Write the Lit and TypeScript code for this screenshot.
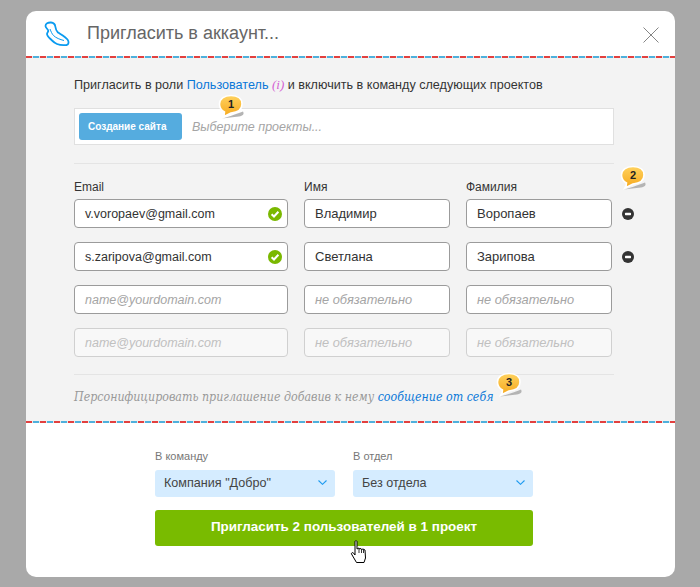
import { LitElement, html, css, svg } from "lit";
import { customElement } from "lit/decorators.js";

const bubble = (n: string, cls: string) => html`
  <div class="bubble ${cls}">
    <svg width="34" height="30" viewBox="0 0 34 30">
      <defs>
        <linearGradient id="g${n}" x1="0" y1="0" x2="0" y2="1">
          <stop offset="0" stop-color="#ffd25e" />
          <stop offset="1" stop-color="#f6a81c" />
        </linearGradient>
      </defs>
      <path d="M6 24.500 C12 23 18 21 27 17.500 C28.500 20 27 22 23 22.500 C17 23 11 24 6 24.500 Z" fill="#b4b4b4" />
      <path
        d="M15 1.500 C22 1.500 26 5 26 10 C26 16 21 18.500 15 19 C12 20.500 9 22 7 23 C8 21.500 8.500 20 8.500 18 C5.500 16.500 3.500 14 3.500 10 C3.500 5 8 1.500 15 1.500 Z"
        fill="url(#g${n})"
        stroke="#fff"
        stroke-width="1.600"
      />
    </svg>
    <span>${n}</span>
  </div>
`;

const check = html`<svg class="check" width="14" height="14" viewBox="0 0 14 14">
  <circle cx="7" cy="7" r="7" fill="#7ab800" />
  <path d="M3.600 7.200 L6 9.500 L10.400 4.800" fill="none" stroke="#fff" stroke-width="2" />
</svg>`;

const minus = html`<svg class="minus" width="12" height="12" viewBox="0 0 12 12">
  <circle cx="6" cy="6" r="6" fill="#333" />
  <rect x="3" y="4.800" width="6" height="2.400" rx="0.600" fill="#fff" />
</svg>`;

const chevron = svg`<path d="M0.500 0.500 L4.500 4.300 L8.500 0.500" fill="none" stroke="#1e9bf0" stroke-width="1.100" />`;

@customElement("app-root")
export class AppRoot extends LitElement {
  static styles = css`
    :host {
      display: block;
      position: relative;
      width: 700px;
      height: 587px;
      background: #a9a9a9;
      overflow: hidden;
      font-family: "Liberation Sans", Arial, sans-serif;
      padding: 11px 25px 10px 26px;
      box-sizing: border-box;
    }
    .modal {
      background: #fff;
      border-radius: 10px;
      height: 566px;
      overflow: hidden;
      position: relative;
    }
    .head {
      height: 45px;
      display: flex;
      align-items: center;
      padding: 0 16px 0 18px;
    }
    .logo { flex: none; }
    .title {
      font-size: 18px;
      color: #666;
      margin-left: 15px;
      flex: 1;
    }
    .close { flex: none; position: relative; top: 1px; }
    .stripe {
      height: 2px;
      background: repeating-linear-gradient(90deg, #e2403f 0 6px, #e8e8e8 6px 7px, #4fb0dc 7px 13px, #e8e8e8 13px 14px);
    }
    .body {
      background: #f3f3f3;
      height: 363px;
      box-sizing: border-box;
      padding: 19px 61px 0 48px;
      position: relative;
    }
    .intro { font-size: 12.600px; line-height: 15px; color: #333; white-space: nowrap; }
    a { color: #0a78d8; text-decoration: none; }
    .role { color: #d35fd3; font-family: "Liberation Serif", serif; font-style: italic; font-size: 13px; }
    .picker {
      margin-top: 15px;
      height: 37px;
      box-sizing: border-box;
      background: #fff;
      border: 1px solid #e0e0e0;
      display: flex;
      align-items: center;
      padding-left: 4px;
    }
    .chip {
      width: 103px;
      height: 27px;
      background: #55acdf;
      border-radius: 3px;
      color: #fff;
      font-size: 10px;
      font-weight: bold;
      display: flex;
      align-items: center;
      box-sizing: border-box;
      padding-left: 9px;
    }
    .ph { margin-left: 10px; font-size: 12.500px; font-style: italic; color: #a5a5a5; }
    hr { border: 0; height: 1px; background: #e4e4e4; margin: 0; }
    .sep1 { margin-top: 18px; }
    .grid {
      display: grid;
      grid-template-columns: 214px 146px 146px;
      column-gap: 16px;
      margin-top: 16px;
      font-size: 12px;
    }
    .lab { height: 14px; line-height: 14px; color: #333; }
    .rows { display: flex; flex-direction: column; gap: 14px; margin-top: 5px; }
    .row {
      display: grid;
      grid-template-columns: 214px 146px 146px 16px;
      column-gap: 16px;
      align-items: center;
    }
    .inp {
      height: 29px;
      box-sizing: border-box;
      border: 1px solid #9b9b9b;
      border-radius: 4px;
      background: #fff;
      font-size: 13px;
      color: #333;
      display: flex;
      align-items: center;
      padding: 0 5px 0 10px;
      justify-content: space-between;
    }
    .inp.mail { font-size: 12.500px; }
    .inp.empty { color: #a5a5a5; font-style: italic; font-size: 12.800px; }
    .inp.off { background: #f8f8f8; border-color: #d0d0d0; color: #c0c0c0; font-style: italic; font-size: 12.800px; }
    .inp.empty.mail, .inp.off.mail { font-size: 12.500px; }
    .minus { margin-left: -6px; display: block; }
    .sep2 { margin-top: 17px; }
    .note {
      margin-top: 14px;
      font-family: "DejaVu Serif", serif;
      font-stretch: condensed;
      font-style: italic;
      font-size: 12.300px;
      line-height: 16px;
      color: #999;
      white-space: nowrap;
    }
    .foot {
      padding: 27px 0 0 129px;
      width: 378px;
    }
    .sels { display: grid; grid-template-columns: 180px 180px; column-gap: 18px; }
    .sl { font-size: 11px; color: #777; height: 13px; line-height: 13px; margin-bottom: 7px; }
    .sel {
      height: 27px;
      box-sizing: border-box;
      padding: 0 8px 2px 9px;
      background: #d5ecff;
      border-radius: 3px;
      display: flex;
      align-items: center;
      justify-content: space-between;
      font-size: 12.600px;
      color: #444;
    }
    .btn {
      margin-top: 13px;
      height: 36px;
      box-sizing: border-box;
      padding-bottom: 3px;
      border-radius: 3px;
      background: #79bb00;
      color: #fff;
      font-size: 13.450px;
      font-weight: bold;
      display: flex;
      align-items: center;
      justify-content: center;
    }
    .bubble {
      position: absolute;
      width: 34px;
      height: 30px;
    }
    .bubble svg { display: block; }
    .bubble span {
      position: absolute;
      left: 3px;
      top: 2px;
      width: 24px;
      text-align: center;
      font-size: 11px;
      font-weight: bold;
      line-height: 16px;
      color: #222;
    }
    .b1 { left: 190px; top: 36px; }
    .b2 { left: 592px; top: 107px; }
    .b3 { left: 468px; top: 314px; }
    .cursor { position: absolute; left: 350px; top: 540px; }
  `;

  render() {
    const rows: [string, string, string][] = [
      ["v.voropaev@gmail.com", "Владимир", "Воропаев"],
      ["s.zaripova@gmail.com", "Светлана", "Зарипова"],
    ];
    return html`
      <div class="modal">
        <div class="head">
          <svg class="logo" width="28" height="28" viewBox="0 0 28 28">
            <path
              d="M1.500 6 C1.500 3.500 4 2.300 7 2.500 C9.500 2.700 11 4 11.300 6.500 C11.600 9 12 10.500 14 12.500 C17 14.500 21 16.500 23.500 19.500 C25 21.500 25 24.500 22.500 25 C19 25.400 15.500 25 13 24 C10.500 23 9 21.500 7.500 20 C5.500 18 3 16 3 14 C3 12.500 4.300 12 4.300 10.800 C4.300 9.300 1.500 8 1.500 6 Z"
              fill="none"
              stroke="#0a9bf0"
              stroke-width="1.800"
              stroke-linejoin="round"
            />
            <path d="M6 9 C7 11.500 8 14 9.500 15.500 C12 18 16 19.500 20 20.500" fill="none" stroke="#0a9bf0" stroke-width="1" />
          </svg>
          <div class="title">Пригласить в аккаунт...</div>
          <svg class="close" width="16" height="16" viewBox="0 0 16 16">
            <path d="M0.500 0.500 L15.500 15.500 M15.500 0.500 L0.500 15.500" stroke="#777" stroke-width="0.900" />
          </svg>
        </div>
        <div class="stripe"></div>
        <div class="body">
          <div class="intro">
            Пригласить в роли <a>Пользователь</a> <span class="role">(i)</span> и включить в команду следующих проектов
          </div>
          <div class="picker">
            <div class="chip">Создание сайта</div>
            <div class="ph">Выберите проекты...</div>
          </div>
          <hr class="sep1" />
          <div class="grid">
            <div class="lab">Email</div>
            <div class="lab">Имя</div>
            <div class="lab">Фамилия</div>
          </div>
          <div class="rows">
            ${rows.map(
              (r) => html`<div class="row">
                <div class="inp mail">${r[0]} ${check}</div>
                <div class="inp">${r[1]}</div>
                <div class="inp">${r[2]}</div>
                ${minus}
              </div>`
            )}
            <div class="row">
              <div class="inp empty mail">name@yourdomain.com</div>
              <div class="inp empty">не обязательно</div>
              <div class="inp empty">не обязательно</div>
            </div>
            <div class="row">
              <div class="inp off mail">name@yourdomain.com</div>
              <div class="inp off">не обязательно</div>
              <div class="inp off">не обязательно</div>
            </div>
          </div>
          <hr class="sep2" />
          <div class="note">Персонифицировать приглашение добавив к нему <a>сообщение от себя</a></div>
          ${bubble("1", "b1")} ${bubble("2", "b2")} ${bubble("3", "b3")}
        </div>
        <div class="stripe"></div>
        <div class="foot">
          <div class="sels">
            <div>
              <div class="sl">В команду</div>
              <div class="sel">Компания "Добро" <svg width="9" height="5" viewBox="0 0 9 5">${chevron}</svg></div>
            </div>
            <div>
              <div class="sl">В отдел</div>
              <div class="sel">Без отдела <svg width="9" height="5" viewBox="0 0 9 5">${chevron}</svg></div>
            </div>
          </div>
          <div class="btn">Пригласить 2 пользователей в 1 проект</div>
        </div>
      </div>
      <svg class="cursor" width="18" height="24" viewBox="0 0 18 24">
        <path
          d="M5 1.500 C5 0.500 7 0.500 7 1.500 L7 9 L9 8 L9.500 9 L11 8.500 L11.500 9.500 L13 9 L15 10 L15.500 18 L14 22.500 L6.500 22.500 L1.500 14 C1 13 2.500 12 3.500 13 L5 15 Z"
          fill="#fff"
          stroke="#000"
          stroke-width="1"
        />
        <path d="M9 9 V13 M11.500 9.500 V13 M13.500 9.500 V13" stroke="#000" stroke-width="0.800" fill="none" />
      </svg>
    `;
  }
}
